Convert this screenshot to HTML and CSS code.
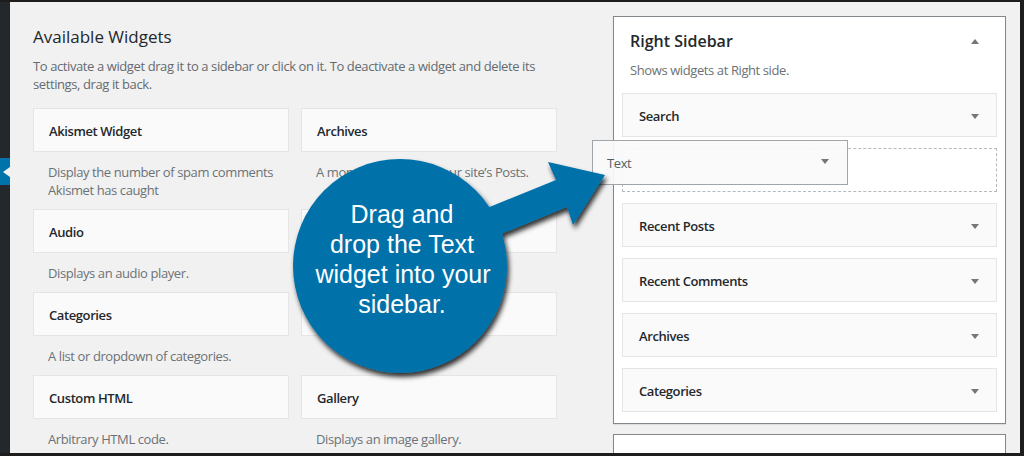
FILE: index.html
```html
<!DOCTYPE html>
<html lang="en">
<head>
<meta charset="utf-8">
<title>Widgets</title>
<link rel="stylesheet" href="styles.css">
</head>
<body>
<div class="frame">
  <nav class="adminmenu">
    <div class="current"><span class="current-arrow"></span></div>
  </nav>
  <main class="content">
    <section class="available">
      <h2 class="available-title">Available Widgets</h2>
      <p class="intro">To activate a widget drag it to a sidebar or click on it. To deactivate a widget and delete its<br>settings, drag it back.</p>
      <div class="widget-grid">
        <div class="widget">
          <div class="widget-top">Akismet Widget</div>
          <p class="widget-desc">Display the number of spam comments Akismet has caught</p>
        </div>
        <div class="widget">
          <div class="widget-top">Archives</div>
          <p class="widget-desc">A monthly archive of your site’s Posts.</p>
        </div>
        <div class="widget">
          <div class="widget-top">Audio</div>
          <p class="widget-desc">Displays an audio player.</p>
        </div>
        <div class="widget">
          <div class="widget-top">Calendar</div>
          <p class="widget-desc">A calendar of your site’s Posts.</p>
        </div>
        <div class="widget">
          <div class="widget-top">Categories</div>
          <p class="widget-desc">A list or dropdown of categories.</p>
        </div>
        <div class="widget">
          <div class="widget-top">Contact Info</div>
          <p class="widget-desc">&nbsp;</p>
        </div>
        <div class="widget">
          <div class="widget-top">Custom HTML</div>
          <p class="widget-desc">Arbitrary HTML code.</p>
        </div>
        <div class="widget">
          <div class="widget-top">Gallery</div>
          <p class="widget-desc">Displays an image gallery.</p>
        </div>
      </div>
    </section>
    <section class="sidebars">
      <div class="sidebar-box">
        <div class="sidebar-head">
          <h3 class="sidebar-title">Right Sidebar</h3>
          <span class="tri tri-up"></span>
        </div>
        <p class="sidebar-desc">Shows widgets at Right side.</p>
        <div class="sidebar-widgets">
          <div class="s-widget"><span>Search</span><span class="tri tri-down"></span></div>
          <div class="placeholder"></div>
          <div class="s-widget"><span>Recent Posts</span><span class="tri tri-down"></span></div>
          <div class="s-widget"><span>Recent Comments</span><span class="tri tri-down"></span></div>
          <div class="s-widget"><span>Archives</span><span class="tri tri-down"></span></div>
          <div class="s-widget"><span>Categories</span><span class="tri tri-down"></span></div>
        </div>
      </div>
      <div class="sidebar-box second">
        <div class="sidebar-head">
          <h3 class="sidebar-title">Left Sidebar</h3>
          <span class="tri tri-up"></span>
        </div>
      </div>
    </section>
  </main>

  <div class="drag-helper"><span>Text</span><span class="tri tri-down"></span></div>

  <svg class="callout" viewBox="0 0 1024 456" width="1024" height="456">
    <defs>
      <filter id="shadow" x="-20%" y="-20%" width="140%" height="140%">
        <feDropShadow dx="2" dy="4" stdDeviation="2.5" flood-color="#000" flood-opacity="0.8"/>
      </filter>
    </defs>
    <g filter="url(#shadow)" fill="#0071a9">
      <polygon points="470,215 556,180 548,162 605,175 573,225 567,207 484,241"/>
      <circle cx="400" cy="266" r="107"/>
    </g>
    <g class="callout-text" fill="#ffffff" text-anchor="middle">
      <text x="402" y="223">Drag and</text>
      <text x="402" y="253">drop the Text</text>
      <text x="403" y="283">widget into your</text>
      <text x="402" y="313">sidebar.</text>
    </g>
  </svg>
</div>
</body>
</html>
```

FILE: styles.css
```css
* {
  box-sizing: border-box;
}

html, body {
  margin: 0;
  padding: 0;
  background: #1d1d1d;
}

body {
  font-family: "Open Sans", "Noto Sans", sans-serif;
  font-size: 13px;
  letter-spacing: -0.4px;
  color: #23282d;
}

.frame {
  position: relative;
  width: 1024px;
  height: 456px;
  overflow: hidden;
  background: #1d1d1d;
  padding: 2px 4px 3px 0;
  display: flex;
}

.adminmenu {
  width: 10px;
  flex: none;
  background: #23282d;
  padding-top: 156px;
}

.current {
  height: 27px;
  background: #0073aa;
  display: flex;
  align-items: center;
  justify-content: flex-end;
}

.current-arrow {
  width: 0;
  height: 0;
  border-top: 5px solid transparent;
  border-bottom: 5px solid transparent;
  border-right: 7px solid #f1f1f1;
}

.content {
  flex: 1;
  background: #f1f1f1;
  display: flex;
  gap: 56px;
  padding-left: 23px;
  overflow: hidden;
}

/* Available widgets */
.available {
  width: 524px;
  flex: none;
  padding-top: 24px;
}

.available-title {
  margin: 0;
  font-size: 17px;
  line-height: 22px;
  font-weight: 400;
  letter-spacing: 0;
  color: #23282d;
}

.intro {
  margin: 9px 0 0;
  line-height: 18px;
  color: #666a70;
  white-space: nowrap;
}

.widget-grid {
  margin-top: 15px;
  display: grid;
  grid-template-columns: 256px 256px;
  column-gap: 12px;
}

.widget-top {
  height: 44px;
  line-height: 42px;
  padding-top: 1px;
  background: #fafafa;
  border: 1px solid #e5e5e5;
  padding-left: 15px;
  font-weight: 600;
  color: #23282d;
}

.widget-desc {
  margin: 0;
  padding: 11px 10px 10px 15px;
  line-height: 18px;
  color: #6c7176;
}

/* Sidebars */
.sidebars {
  width: 393px;
  flex: none;
  padding-top: 14px;
}

.sidebar-box {
  background: #fff;
  border: 1px solid #82878c;
  padding: 0 8px;
  box-shadow: 0 1px 1px rgba(0, 0, 0, 0.08);
}

.sidebar-box.second {
  margin-top: 10px;
  height: 60px;
}

.sidebar-head {
  display: flex;
  align-items: center;
  justify-content: space-between;
  padding: 13px 18px 0 8px;
}

.sidebar-title {
  margin: 0;
  font-size: 16px;
  line-height: 22px;
  font-weight: 600;
  letter-spacing: 0;
  color: #23282d;
}

.sidebar-desc {
  margin: 9px 0 0;
  padding-left: 8px;
  line-height: 18px;
  color: #6c7176;
}

.sidebar-widgets {
  margin-top: 14px;
}

.s-widget {
  height: 44px;
  margin-bottom: 11px;
  background: #fafafa;
  border: 1px solid #e5e5e5;
  display: flex;
  align-items: center;
  justify-content: space-between;
  padding: 2px 17px 0 16px;
  font-weight: 600;
  color: #23282d;
}

.placeholder {
  height: 44px;
  margin-bottom: 11px;
  border: 1px dashed #b4b9be;
}

.tri {
  width: 0;
  height: 0;
  border-left: 4px solid transparent;
  border-right: 4px solid transparent;
}

.tri-down {
  border-top: 5px solid #72777c;
}

.tri-up {
  border-bottom: 5px solid #72777c;
}

/* Widget being dragged */
.drag-helper {
  position: absolute;
  left: 592px;
  top: 140px;
  width: 256px;
  height: 45px;
  border: 1px solid #a0a5aa;
  background: rgba(250, 250, 250, 0.92);
  display: flex;
  align-items: center;
  justify-content: space-between;
  padding: 0 18px 0 14px;
  color: #555d66;
}

.drag-helper .tri-down {
  margin-top: -2px;
}

/* Callout bubble */
.callout {
  position: absolute;
  left: 0;
  top: 0;
  pointer-events: none;
}

.callout-text {
  font-family: "Liberation Sans", Arial, sans-serif;
  font-size: 25px;
  letter-spacing: 0;
}
```
